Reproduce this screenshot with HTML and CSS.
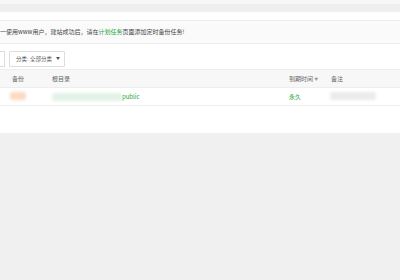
FILE: index.html
```html
<!DOCTYPE html>
<html lang="zh">
<head>
<meta charset="utf-8">
<link rel="stylesheet" href="styles.css">
</head>
<body>
<div class="page">
  <div class="topbar"></div>
  <div class="panel">
    <div class="notice">一使用www用户，建站成功后，请在<a class="link">计划任务</a>页面添加定时备份任务!</div>
    <div class="tools">
      <div class="search"></div>
      <div class="select"><span class="label">分类: 全部分类</span><span class="caret"></span></div>
    </div>
    <div class="table">
      <div class="row head">
        <div class="c1">备份</div>
        <div class="c2">根目录</div>
        <div class="c3">到期时间 <span class="sort">▼</span></div>
        <div class="c4">备注</div>
      </div>
      <div class="row">
        <div class="c1"><span class="blob orange"></span></div>
        <div class="c2"><span class="blob green"></span><span class="path">public</span></div>
        <div class="c3 ok">永久</div>
        <div class="c4"><span class="blob gray"></span></div>
      </div>
    </div>
  </div>
</div>
</body>
</html>
```
FILE: styles.css
```css
html, body {
  margin: 0;
  padding: 0;
  background: #f0f0f0;
  font-family: "Noto Sans CJK SC", "Noto Sans", sans-serif;
  font-size: 6px;
  color: #555;
}
.page {
  width: 400px;
  height: 280px;
  overflow: hidden;
  background: #f0f0f0;
}
.topbar {
  height: 4px;
  background: #f7f7f7;
  border-bottom: 8px solid #efefef;
}
.panel {
  background: #fff;
  padding-top: 8px;
  height: 113px;
}
.notice {
  height: 22px;
  line-height: 22px;
  background: #fafafa;
  border-top: 1px solid #eee;
  border-bottom: 1px solid #eee;
  white-space: nowrap;
  color: #444;
}
.link {
  color: #20a53a;
}
.tools {
  display: flex;
  align-items: center;
  gap: 4px;
  height: 15px;
  margin-top: 7px;
}
.search {
  width: 4px;
  height: 14px;
  border: 1px solid #ddd;
  border-left: none;
}
.select {
  width: 56px;
  box-sizing: border-box;
  height: 16px;
  border: 1px solid #ddd;
  border-radius: 1px;
  padding: 0 3px 0 6px;
  display: flex;
  align-items: center;
  justify-content: space-between;
  color: #555;
  white-space: nowrap;
}
.label {
  white-space: nowrap;
  font-size: 5.5px;
  font-family: "Liberation Sans", "Noto Sans CJK SC", sans-serif;
}
.caret {
  flex: none;
  width: 0;
  height: 0;
  margin-right: 1px;
  border-left: 2.5px solid transparent;
  border-right: 2.5px solid transparent;
  border-top: 3px solid #555;
}
.table {
  margin-top: 3px;
}
.row {
  display: grid;
  grid-template-columns: 52px 237px 42px 1fr;
  height: 17px;
  align-items: center;
  border-bottom: 1px solid #eee;
}
.row.head {
  background: #f7f7f7;
  border-top: 1px solid #eee;
  color: #666;
}
.c1 {
  padding-left: 12px;
}
.sort {
  color: #999;
  font-size: 4px;
}
.ok {
  color: #20a53a;
}
.c2 {
  display: flex;
  align-items: center;
}
.path {
  color: #20a53a;
}
.blob {
  display: inline-block;
  height: 8px;
  border-radius: 3px;
  filter: blur(1.5px);
}
.orange {
  width: 16px;
  margin-left: -2px;
  background: #fcd9c2;
}
.green {
  width: 70px;
  background: #e3f2e7;
}
.gray {
  width: 46px;
  margin-left: -1px;
  background: #ebebeb;
}
```
